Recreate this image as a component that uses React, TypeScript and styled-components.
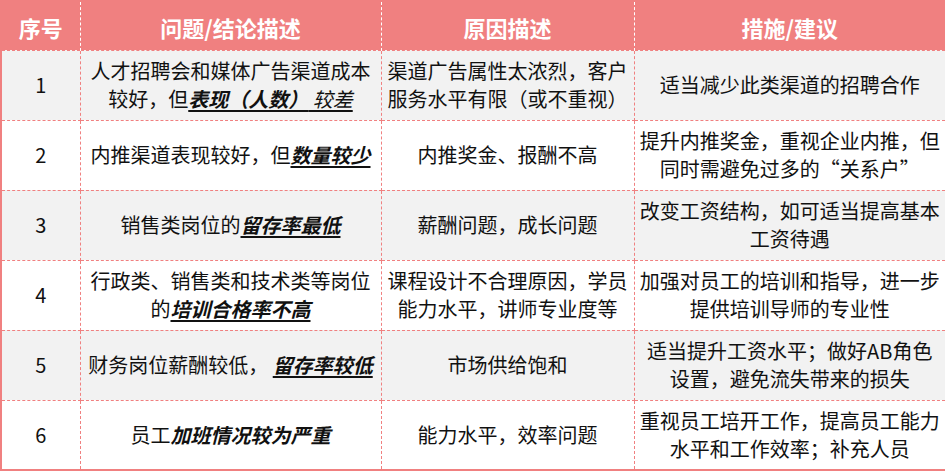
import React from 'react'
import styled, { createGlobalStyle } from 'styled-components'

const pink = '#F08080'

const GlobalStyle = createGlobalStyle`
  html, body {
    margin: 0;
    padding: 0;
    background: #ffffff;
  }
  body {
    font-family: 'Noto Sans CJK SC', 'Noto Sans', 'Liberation Sans', sans-serif;
  }
`

const Table = styled.table`
  width: 945px;
  table-layout: fixed;
  border-collapse: collapse;
  border: 2px solid ${pink};
`

const HeadRow = styled.tr`
  height: 49px;
  background: ${pink};
`

const HeadCell = styled.th`
  color: #ffffff;
  font-size: 22px;
  font-weight: 700;
  text-align: center;
  vertical-align: middle;
  padding: 2px 0 0;
  border-left: 1px dashed #ffffff;

  &:first-child {
    border-left: none;
  }
`

const Row = styled.tr<{ $shade: boolean }>`
  height: 70px;
  background: ${({ $shade }) => ($shade ? '#F2F2F2' : '#FFFFFF')};
`

const Cell = styled.td`
  color: #111111;
  font-size: 20px;
  line-height: 28px;
  text-align: center;
  vertical-align: middle;
  padding: 0 4px;
  border: 1px dashed ${pink};
`

const Emph = styled.span<{ $bold?: boolean; $line?: boolean }>`
  font-style: italic;
  font-weight: ${({ $bold }) => ($bold ? 700 : 400)};
  text-decoration: ${({ $line }) => ($line ? 'underline' : 'none')};
  text-underline-offset: 3px;
`

type RowData = {
  no: string
  issue: React.ReactNode
  reason: React.ReactNode
  advice: React.ReactNode
}

const rows: RowData[] = [
  {
    no: '1',
    issue: (
      <>
        人才招聘会和媒体广告渠道成本
        <br />
        较好，但
        <Emph $bold $line>
          表现（人数）
        </Emph>
        <Emph $line> 较差</Emph>
      </>
    ),
    reason: (
      <>
        渠道广告属性太浓烈，客户
        <br />
        服务水平有限（或不重视）
      </>
    ),
    advice: <>适当减少此类渠道的招聘合作</>,
  },
  {
    no: '2',
    issue: (
      <>
        内推渠道表现较好，但
        <Emph $bold $line>
          数量较少
        </Emph>
      </>
    ),
    reason: <>内推奖金、报酬不高</>,
    advice: (
      <>
        提升内推奖金，重视企业内推，但
        <br />
        同时需避免过多的“关系户”
      </>
    ),
  },
  {
    no: '3',
    issue: (
      <>
        销售类岗位的
        <Emph $bold $line>
          留存率最低
        </Emph>
      </>
    ),
    reason: <>薪酬问题，成长问题</>,
    advice: (
      <>
        改变工资结构，如可适当提高基本
        <br />
        工资待遇
      </>
    ),
  },
  {
    no: '4',
    issue: (
      <>
        行政类、销售类和技术类等岗位
        <br />
        的
        <Emph $bold $line>
          培训合格率不高
        </Emph>
      </>
    ),
    reason: (
      <>
        课程设计不合理原因，学员
        <br />
        能力水平，讲师专业度等
      </>
    ),
    advice: (
      <>
        加强对员工的培训和指导，进一步
        <br />
        提供培训导师的专业性
      </>
    ),
  },
  {
    no: '5',
    issue: (
      <>
        财务岗位薪酬较低，{' '}
        <Emph $bold $line>
          留存率较低
        </Emph>
      </>
    ),
    reason: <>市场供给饱和</>,
    advice: (
      <>
        适当提升工资水平；做好AB角色
        <br />
        设置，避免流失带来的损失
      </>
    ),
  },
  {
    no: '6',
    issue: (
      <>
        员工<Emph $bold>加班情况较为严重</Emph>
      </>
    ),
    reason: <>能力水平，效率问题</>,
    advice: (
      <>
        重视员工培开工作，提高员工能力
        <br />
        水平和工作效率；补充人员
      </>
    ),
  },
]

export default function App() {
  return (
    <>
      <GlobalStyle />
      <Table>
        <colgroup>
          <col style={{ width: 79 }} />
          <col style={{ width: 301 }} />
          <col style={{ width: 253 }} />
          <col style={{ width: 312 }} />
        </colgroup>
        <thead>
          <HeadRow>
            <HeadCell>序号</HeadCell>
            <HeadCell>问题/结论描述</HeadCell>
            <HeadCell>原因描述</HeadCell>
            <HeadCell>措施/建议</HeadCell>
          </HeadRow>
        </thead>
        <tbody>
          {rows.map((r, i) => (
            <Row key={r.no} $shade={i % 2 === 0}>
              <Cell>{r.no}</Cell>
              <Cell>{r.issue}</Cell>
              <Cell>{r.reason}</Cell>
              <Cell>{r.advice}</Cell>
            </Row>
          ))}
        </tbody>
      </Table>
    </>
  )
}
